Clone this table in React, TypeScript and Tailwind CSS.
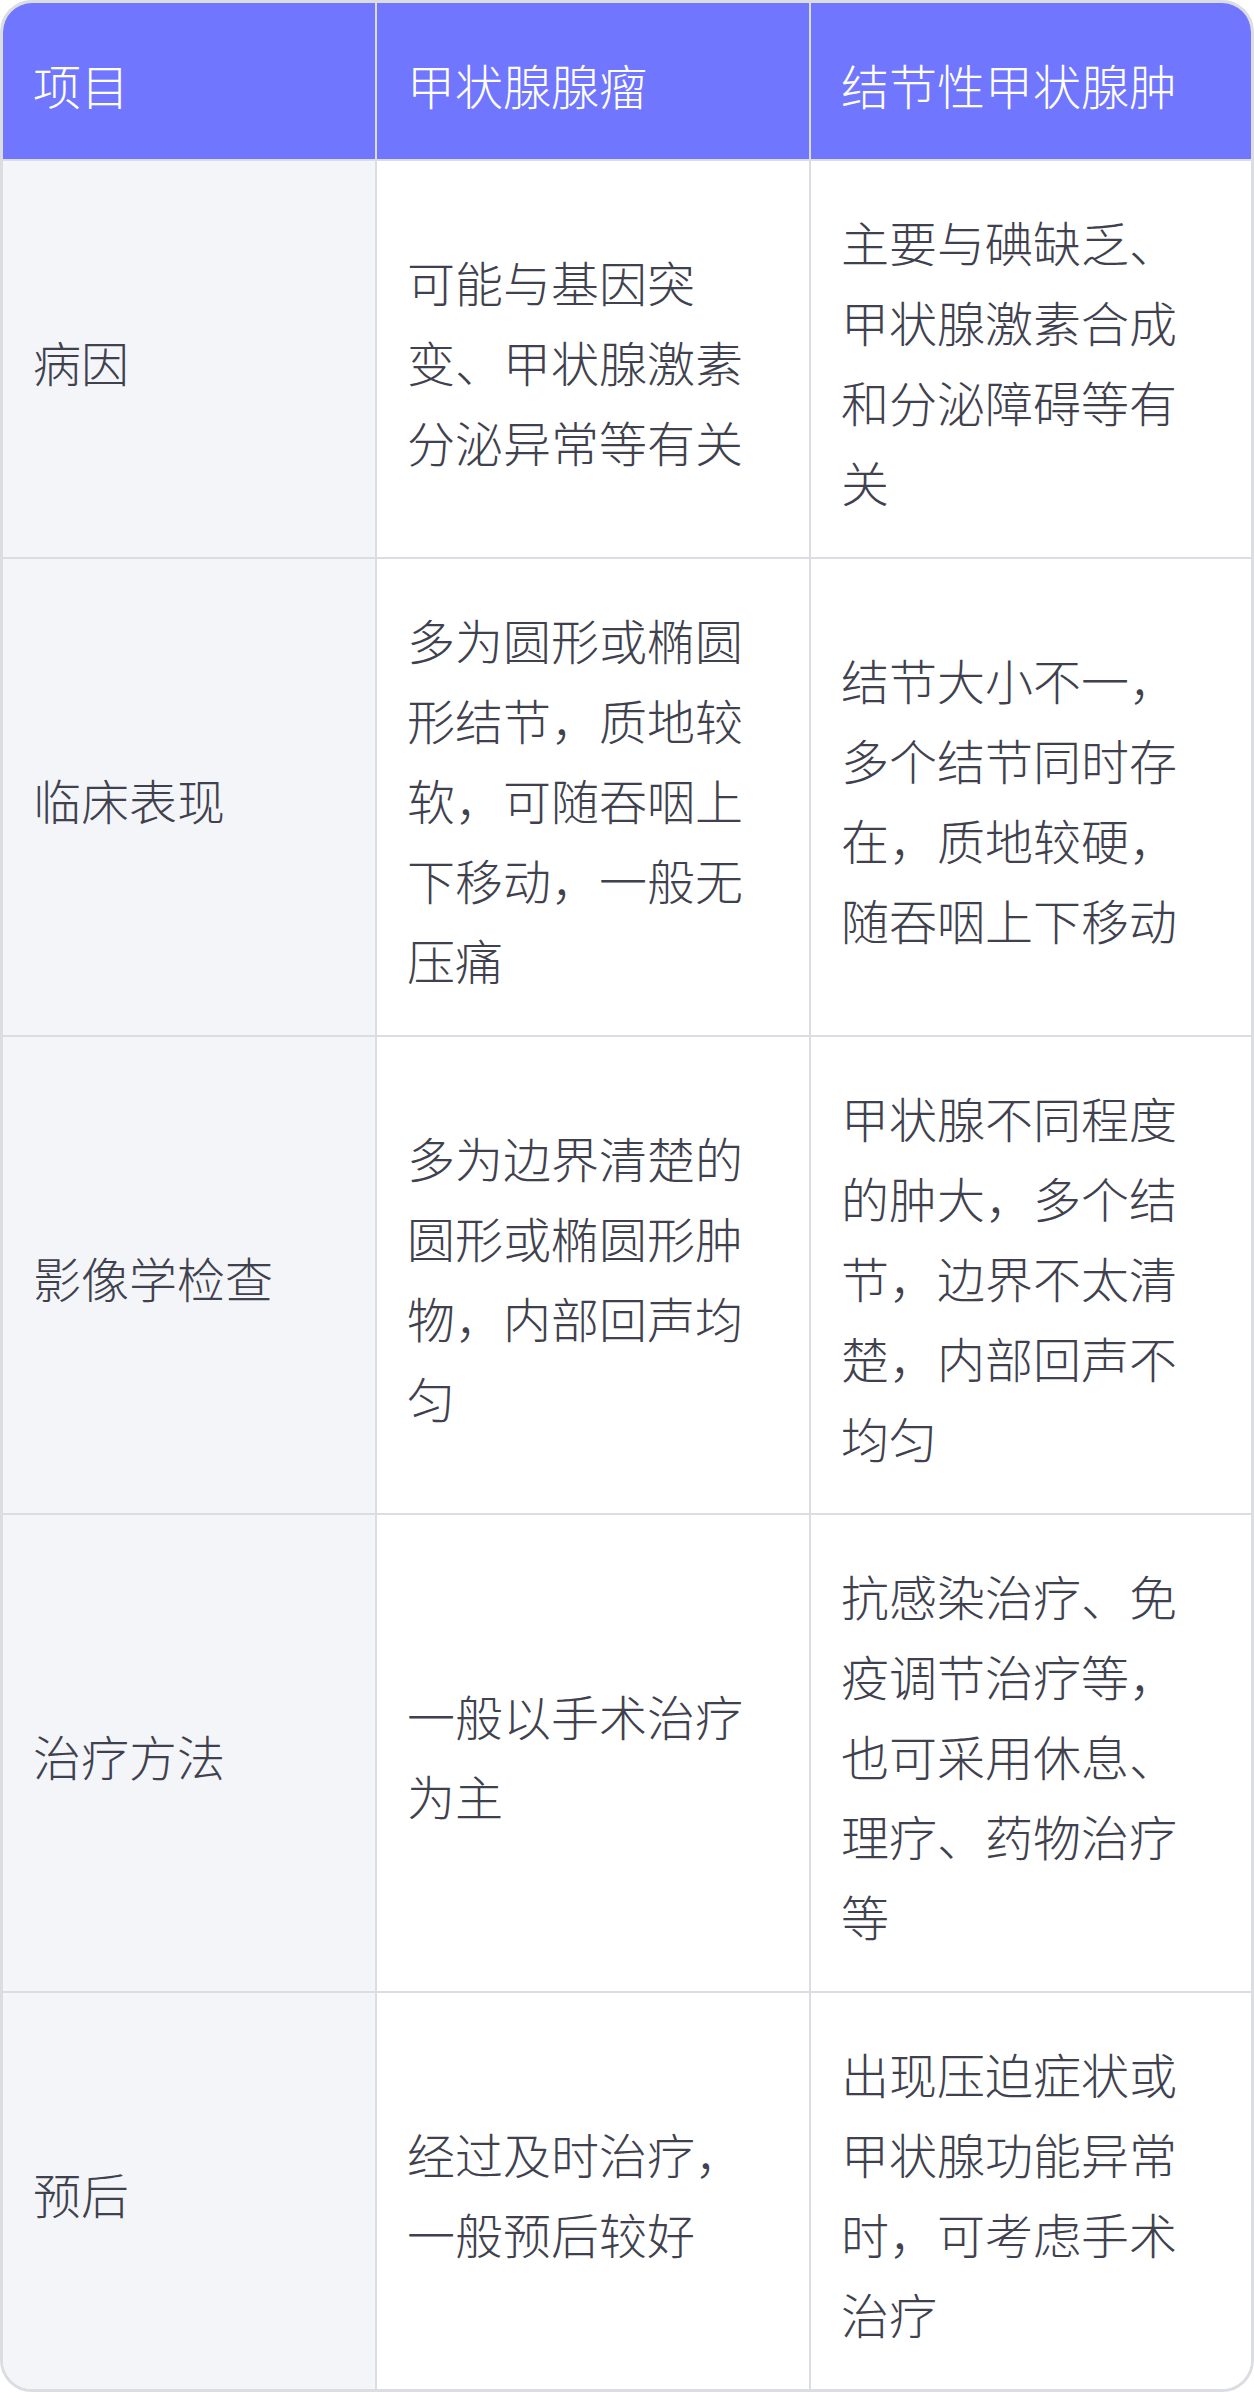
const headers = ["项目", "甲状腺腺瘤", "结节性甲状腺肿"];

const rows: [string, string, string][] = [
  ["病因", "可能与基因突变、甲状腺激素分泌异常等有关", "主要与碘缺乏、甲状腺激素合成和分泌障碍等有关"],
  ["临床表现", "多为圆形或椭圆形结节，质地较软，可随吞咽上下移动，一般无压痛", "结节大小不一，多个结节同时存在，质地较硬，随吞咽上下移动"],
  ["影像学检查", "多为边界清楚的圆形或椭圆形肿物，内部回声均匀", "甲状腺不同程度的肿大，多个结节，边界不太清楚，内部回声不均匀"],
  ["治疗方法", "一般以手术治疗为主", "抗感染治疗、免疫调节治疗等，也可采用休息、理疗、药物治疗等"],
  ["预后", "经过及时治疗，一般预后较好", "出现压迫症状或甲状腺功能异常时，可考虑手术治疗"],
];

export default function App() {
  return (
    <div className="w-[1254px] bg-white font-['Noto_Sans_CJK_SC','Noto_Sans',sans-serif] text-[48px] font-light leading-[80px]">
      <div className="grid grid-cols-[374px_434px_1fr] overflow-hidden rounded-[32px] border-[3px] border-[#dcdde3]">
        {headers.map((h, i) => (
          <div
            key={h}
            className={`flex items-center bg-[#7076fe] px-[30px] pt-[41px] pb-[35px] text-white border-b-2 border-[#dcdde3] ${i < 2 ? "border-r-2" : ""}`}
          >
            {h}
          </div>
        ))}
        {rows.map((r, ri) =>
          r.map((cell, ci) => (
            <div
              key={`${ri}-${ci}`}
              className={`flex items-center px-[30px] pt-[40px] pb-[36px] text-[#3f424e] border-[#dcdde3] ${ci === 0 ? "bg-[#f4f5f9]" : "bg-white"} ${ci < 2 ? "border-r-2" : ""} ${ri < rows.length - 1 ? "border-b-2" : ""}`}
            >
              <span>{cell}</span>
            </div>
          ))
        )}
      </div>
    </div>
  );
}
